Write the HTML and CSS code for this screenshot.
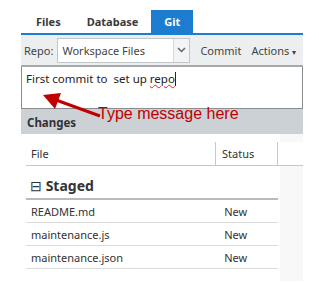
FILE: index.html
```html
<!DOCTYPE html>
<html>
<head>
    <title>Git panel</title>
    <link rel="stylesheet" href="styles.css">
</head>
<body>
    <div class="panel">
        <div class="tabs">
            <div class="tab">Files</div>
            <div class="tab">Database</div>
            <div class="tab active">Git</div>
        </div>

        <div class="toolbar">
            <span class="label">Repo:</span>
            <div class="select">
                <span class="select-text">Workspace Files</span>
                <span class="select-btn">
                    <svg width="9" height="6" viewBox="0 0 9 6"><path d="M1 1 L4.5 4.5 L8 1" fill="none" stroke="#666" stroke-width="1.5"/></svg>
                </span>
            </div>
            <span class="action">Commit</span>
            <span class="action">Actions <span class="caret">&#9662;</span></span>
        </div>

        <div class="message">First commit to&nbsp; set up <span class="typo">repo</span><span class="cursor"></span></div>

        <div class="section-head">Changes</div>

        <div class="changes">
            <div class="grid-head">
                <div class="col-file">File</div>
                <div class="col-status">Status</div>
                <div class="col-rest"></div>
            </div>
            <div class="group">
                <span class="toggle">&#8863;</span> Staged
            </div>
            <div class="row"><div class="col-file">README.md</div><div class="col-status">New</div></div>
            <div class="row"><div class="col-file">maintenance.js</div><div class="col-status">New</div></div>
            <div class="row"><div class="col-file">maintenance.json</div><div class="col-status">New</div></div>
        </div>
    </div>

    <!-- annotation callout -->
    <svg class="arrow" width="70" height="40" viewBox="0 0 70 40">
        <line x1="16" y1="8" x2="60" y2="24" stroke="#c00000" stroke-width="3"/>
        <polygon points="3,3 21,1 15,17" fill="#c00000"/>
    </svg>
    <div class="note">Type message here</div>
</body>
</html>
```

FILE: styles.css
```css
body {
    margin: 0;
    background: #fff;
    font-family: "Noto Sans", "Open Sans", sans-serif;
    font-size: 11px;
    color: #333;
    position: relative;
    width: 319px;
    height: 282px;
    overflow: hidden;
}
.panel {
    margin: 10px 0 0 21px;
    width: 282px;
}
.tabs {
    display: flex;
    height: 23px;
    border-bottom: 2px solid #1c7cd0;
}
.tab {
    padding: 0 13px;
    line-height: 23px;
    font-weight: bold;
    color: #3a3a3a;
}
.tab:first-child {
    padding-left: 15px;
}
.tab.active {
    background: #1c7cd0;
    color: #fff;
}
.toolbar {
    display: flex;
    align-items: center;
    height: 30px;
    background: #eceef0;
    border-bottom: 2px solid #a6a9ac;
    padding-left: 3px;
    white-space: nowrap;
}
.label {
    color: #444;
    margin-right: 4px;
}
.select {
    display: flex;
    width: 131px;
    height: 23px;
    background: #fff;
    border: 1px solid #c3c6c9;
}
.select-text {
    flex: 1;
    line-height: 23px;
    padding-left: 4px;
    color: #444;
}
.select-btn {
    width: 15px;
    border-left: 1px solid #d6d8da;
    background: #f3f4f5;
    display: flex;
    align-items: center;
    justify-content: center;
}
.action {
    margin-left: 10px;
    color: #444;
}
.caret {
    font-size: 8px;
}
.message {
    height: 37px;
    border: 1px solid #8a8d90;
    border-top: none;
    padding: 4px 4px 0;
    font-size: 11.5px;
    line-height: 16px;
    color: #222;
}
.typo {
    text-decoration: underline wavy #e02020;
    text-decoration-thickness: 1px;
}
.cursor {
    display: inline-block;
    width: 1px;
    height: 14px;
    background: #222;
    vertical-align: -3px;
}
.section-head {
    height: 25px;
    line-height: 28px;
    background: #ccd1d6;
    padding-left: 6px;
    font-weight: bold;
    font-size: 11.5px;
    color: #333;
}
.changes {
    padding: 8px 0 12px 5px;
    background: linear-gradient(to right, #fff 259px, #f8f8f8 259px);
}
.grid-head {
    display: flex;
    height: 23px;
    border-bottom: 1px solid #c8c8c8;
    background: #fff;
}
.grid-head .col-status,
.grid-head .col-rest {
    border-left: 1px solid #c8c8c8;
}
.col-file {
    width: 184px;
    padding-left: 5px;
    line-height: 23px;
}
.col-status {
    width: 55px;
    padding-left: 6px;
    line-height: 23px;
}
.col-rest {
    flex: 1;
}
.group {
    width: 248px;
    height: 32px;
    line-height: 40px;
    padding-left: 4px;
    font-size: 14px;
    font-weight: bold;
    border-bottom: 2px solid #b8babc;
    color: #333;
    background: #fff;
}
.toggle {
    font-weight: normal;
    font-size: 14px;
}
.row {
    display: flex;
    width: 252px;
    height: 22px;
    border-bottom: 1px solid #dcdcdc;
    background: #fff;
}
.row .col-file {
    width: 191px;
}
.arrow {
    position: absolute;
    left: 40px;
    top: 92px;
}
.note {
    position: absolute;
    left: 98px;
    top: 105px;
    font-family: "Liberation Sans", Arial, sans-serif;
    font-size: 16px;
    color: #c00000;
}
```
